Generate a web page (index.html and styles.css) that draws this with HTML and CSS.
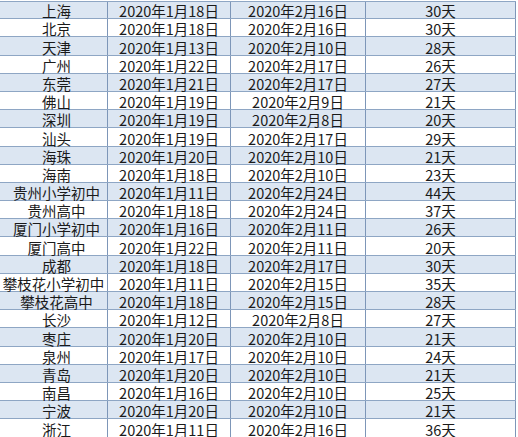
FILE: index.html
```html
<!DOCTYPE html>
<html lang="zh-CN">
<head>
<meta charset="utf-8">
<link rel="stylesheet" href="styles.css">
</head>
<body>
<div class="sheet">
  <div class="row alt"><div class="c city">上海</div><div class="c">2020年1月18日</div><div class="c">2020年2月16日</div><div class="c">30天</div></div>
  <div class="row"><div class="c city">北京</div><div class="c">2020年1月18日</div><div class="c">2020年2月16日</div><div class="c">30天</div></div>
  <div class="row alt"><div class="c city">天津</div><div class="c">2020年1月13日</div><div class="c">2020年2月10日</div><div class="c">28天</div></div>
  <div class="row"><div class="c city">广州</div><div class="c">2020年1月22日</div><div class="c">2020年2月17日</div><div class="c">26天</div></div>
  <div class="row alt"><div class="c city">东莞</div><div class="c">2020年1月21日</div><div class="c">2020年2月17日</div><div class="c">27天</div></div>
  <div class="row"><div class="c city">佛山</div><div class="c">2020年1月19日</div><div class="c">2020年2月9日</div><div class="c">21天</div></div>
  <div class="row alt"><div class="c city">深圳</div><div class="c">2020年1月19日</div><div class="c">2020年2月8日</div><div class="c">20天</div></div>
  <div class="row"><div class="c city">汕头</div><div class="c">2020年1月19日</div><div class="c">2020年2月17日</div><div class="c">29天</div></div>
  <div class="row alt"><div class="c city">海珠</div><div class="c">2020年1月20日</div><div class="c">2020年2月10日</div><div class="c">21天</div></div>
  <div class="row"><div class="c city">海南</div><div class="c">2020年1月18日</div><div class="c">2020年2月10日</div><div class="c">23天</div></div>
  <div class="row alt"><div class="c city">贵州小学初中</div><div class="c">2020年1月11日</div><div class="c">2020年2月24日</div><div class="c">44天</div></div>
  <div class="row"><div class="c city">贵州高中</div><div class="c">2020年1月18日</div><div class="c">2020年2月24日</div><div class="c">37天</div></div>
  <div class="row alt"><div class="c city">厦门小学初中</div><div class="c">2020年1月16日</div><div class="c">2020年2月11日</div><div class="c">26天</div></div>
  <div class="row"><div class="c city">厦门高中</div><div class="c">2020年1月22日</div><div class="c">2020年2月11日</div><div class="c">20天</div></div>
  <div class="row alt"><div class="c city">成都</div><div class="c">2020年1月18日</div><div class="c">2020年2月17日</div><div class="c">30天</div></div>
  <div class="row"><div class="c city wide">攀枝花小学初中</div><div class="c">2020年1月11日</div><div class="c">2020年2月15日</div><div class="c">35天</div></div>
  <div class="row alt"><div class="c city">攀枝花高中</div><div class="c">2020年1月18日</div><div class="c">2020年2月15日</div><div class="c">28天</div></div>
  <div class="row"><div class="c city">长沙</div><div class="c">2020年1月12日</div><div class="c">2020年2月8日</div><div class="c">27天</div></div>
  <div class="row alt"><div class="c city">枣庄</div><div class="c">2020年1月20日</div><div class="c">2020年2月10日</div><div class="c">21天</div></div>
  <div class="row"><div class="c city">泉州</div><div class="c">2020年1月17日</div><div class="c">2020年2月10日</div><div class="c">24天</div></div>
  <div class="row alt"><div class="c city">青岛</div><div class="c">2020年1月20日</div><div class="c">2020年2月10日</div><div class="c">21天</div></div>
  <div class="row"><div class="c city">南昌</div><div class="c">2020年1月16日</div><div class="c">2020年2月10日</div><div class="c">25天</div></div>
  <div class="row alt"><div class="c city">宁波</div><div class="c">2020年1月20日</div><div class="c">2020年2月10日</div><div class="c">21天</div></div>
  <div class="row"><div class="c city">浙江</div><div class="c">2020年1月11日</div><div class="c">2020年2月16日</div><div class="c">36天</div></div>
  <div class="handle"></div>
</div>
</body>
</html>
```
FILE: styles.css
```css
html, body {
  margin: 0;
  padding: 0;
  background: #ffffff;
}
body {
  font-family: "Noto Sans CJK SC", "Noto Sans", sans-serif;
  font-size: 14.5px;
  color: #1a1a1a;
  overflow: hidden;
  height: 437px;
}
.sheet {
  position: relative;
  width: 516px;
  margin-top: 1px;
  border-top: 1px solid #8ea6c4;
}
.row {
  display: grid;
  grid-template-columns: 108px 123px 135px 150px;
  height: 18.2px;
  box-sizing: border-box;
  border-bottom: 1px solid #8ea6c4;
}
.row:first-child {
  height: 17.2px;
}
.alt {
  background: #dce6f2;
}
.c {
  display: flex;
  justify-content: center;
  align-items: flex-end;
  border-right: 1px solid #7d96b8;
  line-height: 15px;
  white-space: nowrap;
  overflow: visible;
}
.city {
  padding-left: 6px;
}
.wide {
  padding-left: 0;
}
.handle {
  position: absolute;
  right: 2px;
  bottom: -4px;
  width: 3px;
  height: 3px;
  background: #3b5a8a;
}
```
